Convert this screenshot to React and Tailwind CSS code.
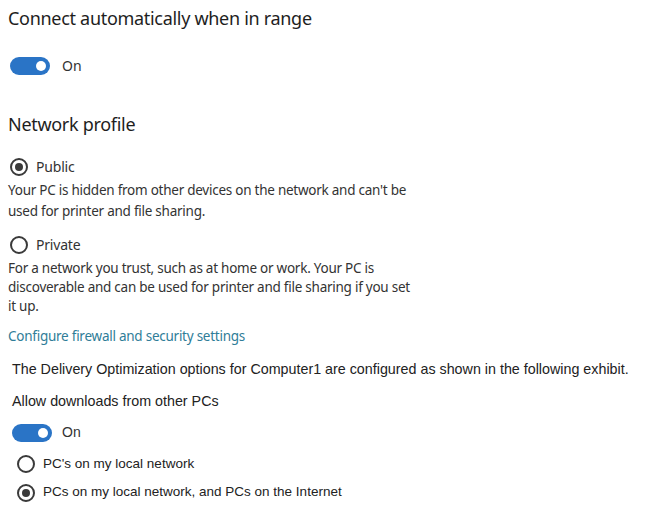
import React from "react";

const Toggle = () => (
  <div className="w-10 h-[18px] rounded-full bg-[#2a74c6] flex items-center justify-end pr-[4px]">
    <div className="w-[10px] h-[10px] rounded-full bg-white" />
  </div>
);

const Radio = ({ checked }) => (
  <div className="w-[18px] h-[18px] rounded-full border-2 border-[#3a3a3a] flex items-center justify-center">
    {checked && <div className="w-2 h-2 rounded-full bg-[#3a3a3a]" />}
  </div>
);

const segoe = { fontFamily: '"Noto Sans", "Open Sans", sans-serif' };
const arial = { fontFamily: '"Liberation Sans", Arial, sans-serif' };

export default function App() {
  return (
    <div className="w-[646px] h-[529px] bg-white text-[#222] overflow-hidden">
      <div className="pl-2" style={segoe}>
        <h1 className="text-[18px] leading-6 pt-[6px] tracking-[-0.3px] text-[#1e1e1e]">
          Connect automatically when in range
        </h1>
        <div className="flex items-center gap-3 mt-[25px] ml-[2px]">
          <Toggle />
          <span className="text-[14px] text-[#333]">On</span>
        </div>

        <h2 className="text-[18px] leading-6 mt-[36px] tracking-[-0.3px] text-[#1e1e1e]">
          Network profile
        </h2>

        <div className="flex items-center gap-2 mt-[20px] ml-[2px]">
          <Radio checked />
          <span className="text-[14px] tracking-[-0.2px] text-[#333]">Public</span>
        </div>
        <p className="text-[13.5px] leading-[21px] mt-[3px] tracking-[-0.25px] text-[#333] w-[412px]">
          Your PC is hidden from other devices on the network and can't be
          used for printer and file sharing.
        </p>

        <div className="flex items-center gap-2 mt-[12px] ml-[2px]">
          <Radio />
          <span className="text-[14px] tracking-[-0.2px] text-[#333]">Private</span>
        </div>
        <p className="text-[13.5px] leading-[19px] mt-[4px] tracking-[-0.25px] text-[#333] w-[412px]">
          For a network you trust, such as at home or work. Your PC is
          discoverable and can be used for printer and file sharing if you set
          it up.
        </p>

        <p className="text-[13.5px] mt-[10px] tracking-[-0.25px] text-[#2f7d98]">
          Configure firewall and security settings
        </p>
      </div>

      <div className="pl-3" style={arial}>
        <p className="text-[14.3px] mt-[13px] text-[#222]">
          The Delivery Optimization options for Computer1 are configured as
          shown in the following exhibit.
        </p>
        <p className="text-[14.3px] mt-[10px] text-[#222]">
          Allow downloads from other PCs
        </p>
        <div className="flex items-center gap-[10px] mt-[10px]">
          <Toggle />
          <span className="text-[14px] text-[#333]">On</span>
        </div>
        <div className="flex items-center gap-2 mt-[11px] ml-[5px]">
          <Radio />
          <span className="text-[13.5px] text-[#222]">PC's on my local network</span>
        </div>
        <div className="flex items-center gap-2 mt-[8px] ml-[5px]">
          <Radio checked />
          <span className="text-[13.5px] text-[#222]">
            PCs on my local network, and PCs on the Internet
          </span>
        </div>
      </div>
    </div>
  );
}
